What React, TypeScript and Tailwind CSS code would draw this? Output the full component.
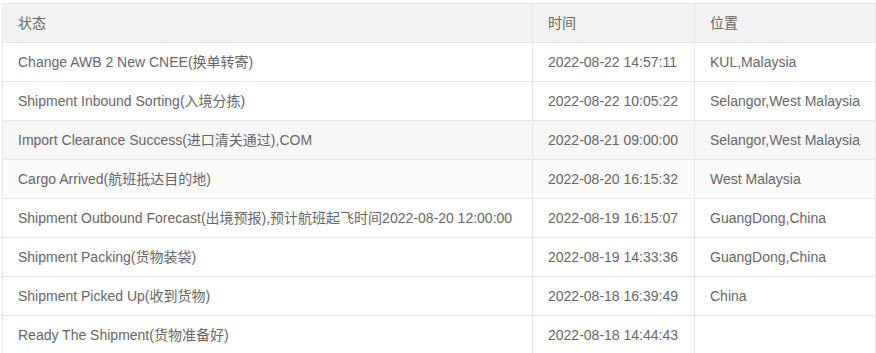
const rows: [string, string, string][] = [
  ["Change AWB 2 New CNEE(换单转寄)", "2022-08-22 14:57:11", "KUL,Malaysia"],
  ["Shipment Inbound Sorting(入境分拣)", "2022-08-22 10:05:22", "Selangor,West Malaysia"],
  ["Import Clearance Success(进口清关通过),COM", "2022-08-21 09:00:00", "Selangor,West Malaysia"],
  ["Cargo Arrived(航班抵达目的地)", "2022-08-20 16:15:32", "West Malaysia"],
  ["Shipment Outbound Forecast(出境预报),预计航班起飞时间2022-08-20 12:00:00", "2022-08-19 16:15:07", "GuangDong,China"],
  ["Shipment Packing(货物装袋)", "2022-08-19 14:33:36", "GuangDong,China"],
  ["Shipment Picked Up(收到货物)", "2022-08-18 16:39:49", "China"],
  ["Ready The Shipment(货物准备好)", "2022-08-18 14:44:43", ""],
];

// faint hover tint left on two rows in the screenshot
const rowBg = ["", "", "bg-[#f7f7f7]", "bg-[#fafafa]", "", "", "", ""];

export default function App() {
  return (
    <div
      className="pl-[2px] pt-[3px] bg-white text-[14px] text-[#666]"
      style={{ fontFamily: '"Liberation Sans", Arial, "Noto Sans CJK SC", sans-serif' }}
    >
      <table className="w-[874px] border-collapse table-fixed">
        <colgroup>
          <col className="w-[530px]" />
          <col className="w-[162px]" />
          <col />
        </colgroup>
        <thead>
          <tr className="bg-[#f2f2f2]">
            {["状态", "时间", "位置"].map((h) => (
              <th
                key={h}
                className="h-[39px] border border-[#e6e6e6] px-[15px] text-left font-normal text-[#666] leading-[20px]"
              >
                {h}
              </th>
            ))}
          </tr>
        </thead>
        <tbody>
          {rows.map((r, i) => (
            <tr key={i} className={rowBg[i]}>
              {r.map((c, j) => (
                <td
                  key={j}
                  className="h-[39px] border border-[#e6e6e6] px-[15px] leading-[20px] whitespace-nowrap"
                >
                  {c}
                </td>
              ))}
            </tr>
          ))}
        </tbody>
      </table>
    </div>
  );
}
